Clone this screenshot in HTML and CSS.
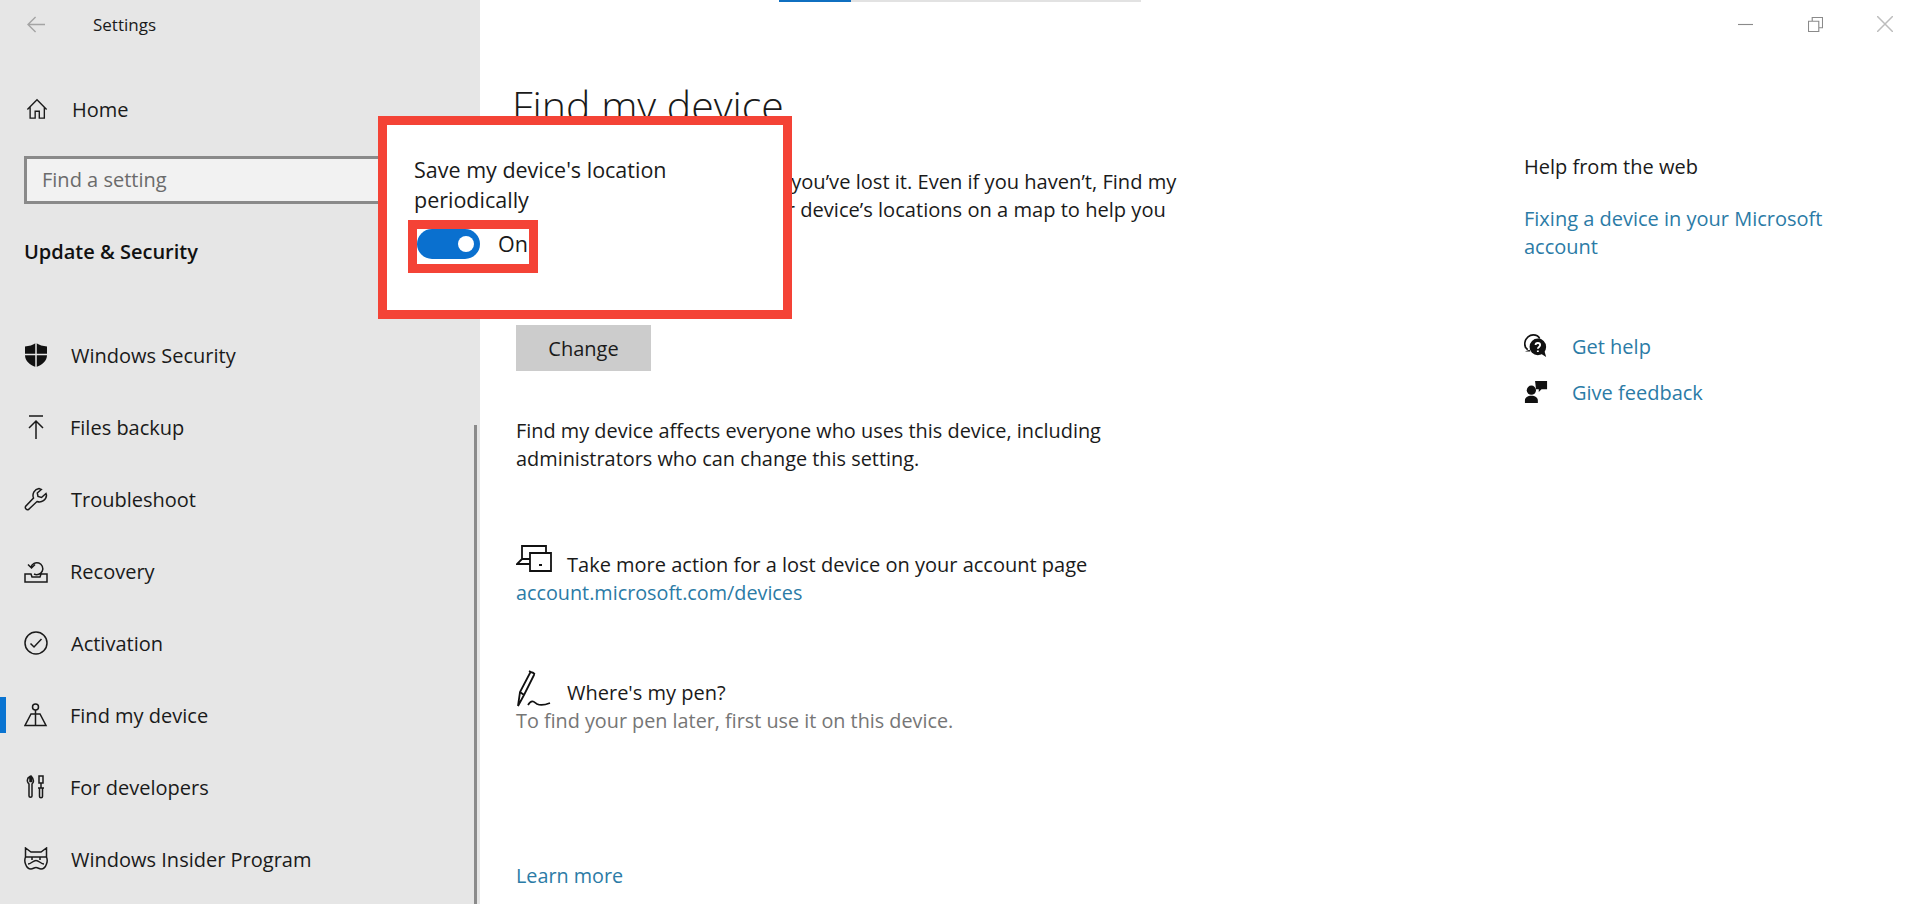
FILE: index.html
```html
<!DOCTYPE html>
<html lang="en">
<head>
<meta charset="utf-8">
<title>Settings</title>
<link rel="stylesheet" href="styles.css">
</head>
<body>
<div class="window">
  <aside class="sidebar">
    <div class="title-row">
      <svg class="back" viewBox="0 0 20 18"><path d="M9 1 1 9l8 8M1 9h18"/></svg>
      <span class="app-name">Settings</span>
    </div>
    <div class="nav-item home">
      <svg class="icon" viewBox="0 0 24 24"><path d="M1.500 12.500 12 2l10.500 10.500M4.500 10v12h5.500v-7.500h4.500V22H20V10"/></svg>
      <span>Home</span>
    </div>
    <div class="search">Find a setting</div>
    <div class="section">Update &amp; Security</div>
    <nav class="nav">
      <div class="nav-item">
        <svg class="icon" viewBox="0 0 24 24"><path class="fill" d="M12 0C9 2 5 3.200 1 3.500V12c0 6 5 10 11 12 6-2 11-6 11-12V3.500C19 3.200 15 2 12 0z"/><path class="cut" d="M0 11.600h24M12 0v24"/></svg>
        <span>Windows Security</span>
      </div>
      <div class="nav-item">
        <svg class="icon" viewBox="0 0 24 24"><path d="M5 1h14M12 25V6M5 13l7-7 7 7"/></svg>
        <span class="tight">Files backup</span>
      </div>
      <div class="nav-item">
        <svg class="icon" viewBox="0 0 24 24"><path d="M15 1.500a7 7 0 0 0-5.500 9.500L1.500 19.500a2.300 2.300 0 0 0 3 3L13 14.500a7 7 0 0 0 9.500-6.500l-.5-1.500-4.500 4-3.500-1-.7-3.500 4-3.500z"/></svg>
        <span>Troubleshoot</span>
      </div>
      <div class="nav-item">
        <svg class="icon" viewBox="0 0 24 24"><path d="M1 15v8h22v-8h-6l-1 3H8l-1-3zM7 8a6 6 0 1 1 3 7M4 5.500 7.500 9 11 5.500"/></svg>
        <span class="tight">Recovery</span>
      </div>
      <div class="nav-item">
        <svg class="icon" viewBox="0 0 24 24"><circle cx="12" cy="12" r="11"/><path d="m6.500 12.500 3.500 3.500 7.500-8"/></svg>
        <span>Activation</span>
      </div>
      <div class="nav-item current">
        <svg class="icon" viewBox="0 0 24 24"><circle cx="11.500" cy="4" r="3"/><path d="M11.500 7v15M7 11h9l6 11.500H1z"/></svg>
        <span class="tight">Find my device</span>
      </div>
      <div class="nav-item">
        <svg class="icon" viewBox="0 0 24 24"><path d="M6 1.500c-2 1-3 3-2.500 5 .3 1 1 2 1.500 2.500v12c0 1.500 3 1.500 3 0V9c1-1 1.500-2 1.500-3 0-2-1-3.500-2-4.500v5H6zM15 1h4v7h-4zM17 8v5M14 13h6M15.500 13v8.500c0 1.500 3 1.500 3 0V13"/></svg>
        <span class="tight">For developers</span>
      </div>
      <div class="nav-item">
        <svg class="icon" viewBox="0 0 24 24"><path d="M1.500 10V1l5.500 4h10l5.500-4v9M1.500 10h21M1.500 10C.7 12 .7 15 1.500 17c1 3 3 5 5.500 5 2 0 3-1.500 5-1.500s3 1.500 5 1.500c2.500 0 4.500-2 5.500-5 .8-2 .8-5 0-7M4 17c3 0 5-3.500 8-3.500s5 3.500 8 3.500M8 10v3M16 10v3"/></svg>
        <span>Windows Insider Program</span>
      </div>
    </nav>
    <div class="scroll-thumb"></div>
  </aside>

  <main class="main">
    <header class="topbar">
      <div class="tabs"><div class="tab-on"></div></div>
      <div class="controls">
        <div class="control"><svg viewBox="0 0 16 16"><path d="M0 8h16"/></svg></div>
        <div class="control"><svg viewBox="0 0 16 16"><path d="M.5 4.500h11v11H.5zM4.500 4V.5h11v11H12"/></svg></div>
        <div class="control"><svg class="light" viewBox="0 0 16 16"><path d="m0 0 16 16M16 0 0 16"/></svg></div>
      </div>
    </header>
    <div class="columns">
      <section class="content">
        <h1>Find my device</h1>
        <p class="intro"><span class="under first">Use it to locate your device if</span> you’ve lost it. Even if you haven’t, Find my<br><span class="under second">device can save your</span> device’s locations on a map to help you</p>
        <button class="btn">Change</button>
        <p class="affects">Find my device affects everyone who uses this device, including<br>administrators who can change this setting.</p>
        <div class="block action">
          <div class="lead">
            <svg class="lead-icon" viewBox="0 0 36 28"><path d="M6 14V1h24v6M14 19H1l5-5h8M14 8h21v18H14zM23 20h3"/></svg>
            <span>Take more action for a lost device on your account page</span>
          </div>
          <a class="link">account.microsoft.com/devices</a>
        </div>
        <div class="block pen">
          <div class="lead">
            <svg class="lead-icon pen-icon" viewBox="0 0 36 38"><path d="M2 36 4 22 14 3c1-2 5 0 4 2L8 25zM4 22l4 3M13 1l6 3M12 35c4-6 6-3 9-1 4 2 8 1 13-1"/></svg>
            <span>Where's my pen?</span>
          </div>
          <p class="muted">To find your pen later, first use it on this device.</p>
        </div>
        <a class="link learn">Learn more</a>
      </section>
      <aside class="help">
        <p class="help-title">Help from the web</p>
        <a class="link help-link">Fixing a device in your Microsoft<br>account</a>
        <div class="help-row get">
          <svg class="help-icon" viewBox="0 0 26 26"><path class="ring" d="M4 17C1 15 .5 12 1 9c1-5 5-8 9-8 3 0 6 2 7 4"/><path class="solid" d="M1 19l5-2 1 2z"/><circle class="solid" cx="15" cy="14" r="9"/><path class="solid" d="m18 21 6 4-2-7z"/><path class="qmark" d="M12.500 12c0-3 5-3 5 0 0 2-2.500 2-2.500 4M15 18v1.500"/></svg>
          <a class="link">Get help</a>
        </div>
        <div class="help-row">
          <svg class="help-icon" viewBox="0 0 26 26"><circle class="solid" cx="8" cy="11" r="5"/><path class="solid" d="M1 25v-3c0-3 3-5 7-5s7 2 7 5v3zM12 1h13v9h-6l-3 3v-3h-3z"/></svg>
          <a class="link">Give feedback</a>
        </div>
      </aside>
    </div>
  </main>

  <div class="callout">
    <p>Save my device's location<br>periodically</p>
    <div class="toggle-frame">
      <div class="toggle"><div class="knob"></div></div>
      <span class="toggle-label">On</span>
    </div>
  </div>
</div>
</body>
</html>
```
FILE: styles.css
```css
* { box-sizing: border-box; }
html, body { margin: 0; height: 100%; }
body { font-family: "Open Sans", "Noto Sans", sans-serif; font-size: 20px; color: #1a1a1a; background: #fff; overflow: hidden; }
p, h1 { margin: 0; font-weight: normal; }
svg { fill: none; stroke: currentColor; stroke-width: 1.500; display: block; flex: none; }

.window { position: relative; display: flex; height: 904px; width: 1920px; overflow: hidden; }

.sidebar { position: relative; width: 480px; flex: none; background: #e6e6e6; overflow: hidden; }
.title-row { display: flex; align-items: center; height: 48px; padding-left: 27px; }
.back { width: 19px; height: 17px; color: #a4a4a4; margin-right: 47px; }
.app-name { font-size: 17px; }

.nav-item { position: relative; display: flex; align-items: center; height: 72px; padding-left: 24px; }
.nav-item > span { margin-left: 23px; }
.nav-item > span.tight { margin-left: 22px; }
.icon { width: 24px; height: 24px; }
.fill { fill: #111; stroke: none; }
.cut { stroke: #e6e6e6; stroke-width: 1.500; }
.home { margin-top: 25px; padding-left: 26px; }
.home .icon { width: 22px; height: 22px; }
.home > span { margin-left: 24px; }
.search { margin: 11px 0 0 24px; width: 432px; height: 48px; background: #f2f2f2; border: 3px solid #8a8a8a; padding-left: 15px; line-height: 41px; color: #6b6b6b; }
.section { margin: 24px 0 0 24px; height: 48px; line-height: 48px; font-weight: 600; color: #111; }
.nav { margin-top: 43px; }
.current::before { content: ""; position: absolute; left: 0; top: 18px; width: 6px; height: 36px; background: #0a74d1; }
.scroll-thumb { position: absolute; left: 474px; top: 425px; bottom: 0; width: 3px; background: #8b8b8b; }

.main { flex: 1; display: flex; flex-direction: column; min-width: 0; }
.topbar { display: flex; height: 48px; flex: none; }
.tabs { margin-left: 299px; width: 362px; height: 2px; background: #e2e2e2; }
.tab-on { width: 72px; height: 2px; background: #0f6fc0; }
.controls { display: flex; margin-left: auto; color: #8a8a8a; }
.control { width: 70px; height: 48px; display: flex; align-items: center; justify-content: center; }
.control svg { width: 15px; height: 15px; stroke-width: 1.200; }
.control svg.light { color: #bdbdbd; width: 16px; height: 16px; stroke-width: 1.500; }

.columns { display: flex; flex: 1; }
.content { width: 1044px; flex: none; padding-left: 36px; font-size: 19.800px; }
h1 { font-size: 41px; font-weight: 300; line-height: 58px; margin: 28px 0 0 -4px; color: #1a1a1a; }
.intro { margin-top: 34px; line-height: 28px; white-space: nowrap; font-size: 20.100px; }
.under { display: inline-block; text-align: right; }
.under.first { width: 270px; }
.under.second { width: 279px; }
.btn { display: block; margin-top: 101px; width: 135px; height: 46px; background: #ccc; border: 0; padding: 0; font: inherit; font-size: 20px; color: #1a1a1a; }
.affects { margin-top: 46px; line-height: 28px; font-size: 19.900px; }
.block { line-height: 28px; }
.action { margin-top: 78px; }
.pen { margin-top: 63px; }
.lead { display: flex; align-items: flex-end; font-size: 20px; }
.lead > span { margin-left: 15px; }
.lead-icon { width: 36px; height: 28px; color: #111; margin-top: -6px; margin-bottom: 6px; stroke-width: 1.800; }
.pen-icon { height: 38px; margin-top: 0; margin-bottom: -1px; }
.link { color: #2b7ba6; }
.block .link { display: block; }
.muted { color: #767676; }
.learn { display: block; margin-top: 127px; line-height: 28px; }

.help-title { margin-top: 105px; line-height: 28px; }
.help-link { display: block; margin-top: 24px; line-height: 28px; }
.help-row { display: flex; align-items: center; height: 46px; }
.help-row .link { margin-left: 24px; }
.get { margin-top: 62px; }
.help-icon { width: 24px; height: 24px; color: #111; }
.solid { fill: #111; stroke: none; }
.ring { stroke-width: 1.800; }
.qmark { stroke: #fff; stroke-width: 2; }

.callout { position: absolute; left: 378px; top: 116px; width: 414px; height: 203px; background: #fff; border: 9px solid #f44336; padding: 30px 0 0 27px; font-size: 21.500px; }
.callout p { line-height: 30px; }
.toggle-frame { display: flex; align-items: flex-start; margin: 5px 0 0 -6px; width: 130px; height: 53px; border: 9px solid #f44336; background: #fff; }
.toggle { position: relative; width: 63px; height: 30px; flex: none; background: #0a70cf; border-radius: 15px; }
.knob { position: absolute; right: 6px; top: 7px; width: 16px; height: 16px; border-radius: 50%; background: #fff; }
.toggle-label { margin-left: 18px; line-height: 30px; }
```
